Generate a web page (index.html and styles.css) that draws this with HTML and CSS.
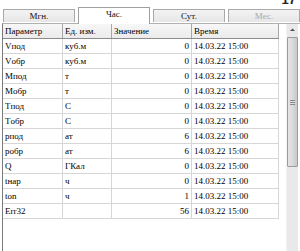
FILE: index.html
```html
<!DOCTYPE html>
<html>
<head>
<meta charset="utf-8">
<link rel="stylesheet" href="styles.css">
</head>
<body>
<div class="top"><span class="page">17</span></div>
<div class="tabs">
  <div class="tab">Мгн.</div>
  <div class="tab active">Час.</div>
  <div class="tab">Сут.</div>
  <div class="tab disabled">Мес.</div>
</div>
<div class="panel">
  <div class="grid">
    <div class="row head">
      <div class="c c1">Параметр</div><div class="c c2">Ед. изм.</div><div class="c c3">Значение</div><div class="c c4">Время</div>
    </div>
    <div class="row"><div class="c c1">Vпод</div><div class="c c2">куб.м</div><div class="c c3 num">0</div><div class="c c4">14.03.22 15:00</div></div>
    <div class="row"><div class="c c1">Vобр</div><div class="c c2">куб.м</div><div class="c c3 num">0</div><div class="c c4">14.03.22 15:00</div></div>
    <div class="row"><div class="c c1">Mпод</div><div class="c c2">т</div><div class="c c3 num">0</div><div class="c c4">14.03.22 15:00</div></div>
    <div class="row"><div class="c c1">Mобр</div><div class="c c2">т</div><div class="c c3 num">0</div><div class="c c4">14.03.22 15:00</div></div>
    <div class="row"><div class="c c1">Tпод</div><div class="c c2">C</div><div class="c c3 num">0</div><div class="c c4">14.03.22 15:00</div></div>
    <div class="row"><div class="c c1">Tобр</div><div class="c c2">C</div><div class="c c3 num">0</div><div class="c c4">14.03.22 15:00</div></div>
    <div class="row"><div class="c c1">pпод</div><div class="c c2">ат</div><div class="c c3 num">6</div><div class="c c4">14.03.22 15:00</div></div>
    <div class="row"><div class="c c1">pобр</div><div class="c c2">ат</div><div class="c c3 num">6</div><div class="c c4">14.03.22 15:00</div></div>
    <div class="row"><div class="c c1">Q</div><div class="c c2">ГКал</div><div class="c c3 num">0</div><div class="c c4">14.03.22 15:00</div></div>
    <div class="row"><div class="c c1">tнар</div><div class="c c2">ч</div><div class="c c3 num">0</div><div class="c c4">14.03.22 15:00</div></div>
    <div class="row"><div class="c c1">ton</div><div class="c c2">ч</div><div class="c c3 num">1</div><div class="c c4">14.03.22 15:00</div></div>
    <div class="row"><div class="c c1">Err32</div><div class="c c2"></div><div class="c c3 num">56</div><div class="c c4">14.03.22 15:00</div></div>
  </div>
  <div class="scrollbar">
    <div class="arrow"><svg width="11" height="12" viewBox="0 0 11 12"><path d="M3 7 L5.5 4.5 L8 7 Z" fill="#505050"/></svg></div>
    <div class="thumb"><span class="grip"></span></div>
  </div>
</div>
</body>
</html>
```

FILE: styles.css
```css
html, body {
  margin: 0;
  padding: 0;
  background: #ffffff;
  overflow: hidden;
  font-family: "Liberation Serif", "Times New Roman", serif;
  font-size: 9px;
  color: #000;
}
.top {
  height: 6px;
  overflow: hidden;
  display: flex;
  justify-content: flex-end;
  padding-right: 4px;
}
.page {
  font-family: "Liberation Sans", Arial, sans-serif;
  font-weight: bold;
  font-size: 13px;
  line-height: 13px;
  margin-top: -7px;
  color: #222;
}
.tabs {
  display: flex;
  align-items: flex-end;
  gap: 3px;
  padding-left: 3px;
  height: 17px;
  position: relative;
  z-index: 1;
}
.tab {
  width: 70px;
  height: 12px;
  margin-bottom: 1px;
  border: 1px solid #a9a9a9;
  border-bottom: none;
  background: linear-gradient(#f3f3f3, #e6e6e6);
  text-align: center;
  line-height: 13px;
  color: #111;
}
.tab.active {
  width: 70px;
  height: 16px;
  margin-bottom: -1px;
  background: #ffffff;
  border-color: #a0a0a0;
}
.tab.disabled {
  color: #a8a8a8;
}
.panel {
  display: flex;
  margin-left: 2px;
  border-left: 1px solid #7a7a7a;
  border-top: 1px solid #b0b0b0;
  height: 227px;
}
.grid {
  width: 276px;
}
.row {
  display: flex;
  height: 14px;
  border-bottom: 1px solid #d6d6d6;
}
.row.head {
  height: 14px;
  background: linear-gradient(#f7f7f7, #ebebeb);
  border-bottom: 1px solid #8c8c8c;
}
.c {
  box-sizing: border-box;
  padding-left: 2px;
  line-height: 14px;
  white-space: nowrap;
  overflow: hidden;
  border-right: 1px solid #d6d6d6;
}
.head .c {
  border-right: 1px solid #a8a8a8;
}
.c1 { width: 60px; }
.c2 { width: 49px; }
.c3 { width: 80px; }
.c4 { width: 87px; }
.num {
  text-align: right;
  padding-right: 2px;
}
.scrollbar {
  margin-left: 7px;
  width: 11px;
  background: #e9e9e9;
  border-left: 1px solid #f4f4f4;
  display: flex;
  flex-direction: column;
}
.arrow {
  height: 12px;
}
.arrow svg { display: block; }
.thumb {
  height: 130px;
  margin: 1px 0 0 0;
  box-sizing: border-box;
  border: 1px solid #9c9c9c;
  border-radius: 1px;
  background: linear-gradient(90deg, #e4e4e4, #dadada 50%, #c8c8c8);
  display: flex;
  align-items: center;
  justify-content: center;
}
.grip {
  width: 5px;
  height: 5px;
  background: repeating-linear-gradient(#8a8a8a 0 1px, #dcdcdc 1px 2px);
}
```
